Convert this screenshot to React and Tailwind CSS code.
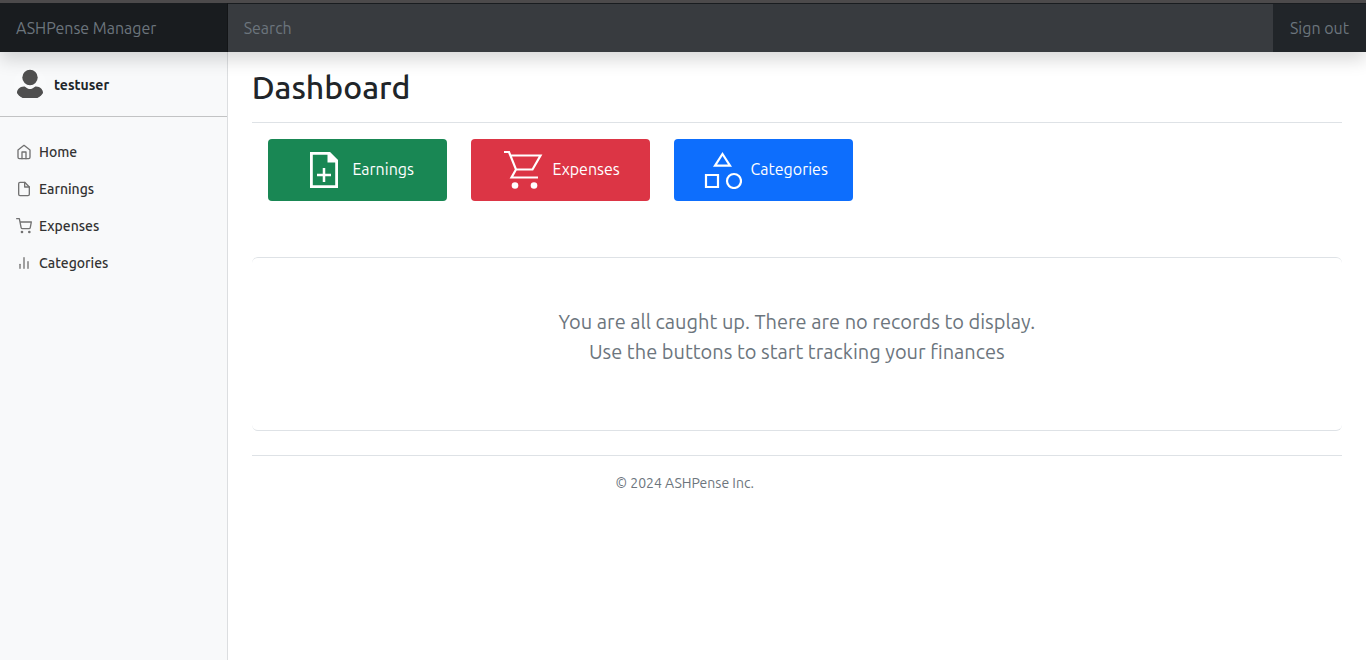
import { FiHome, FiFile, FiShoppingCart, FiBarChart2 } from "react-icons/fi";

const links = [
  { label: "Home", Icon: FiHome },
  { label: "Earnings", Icon: FiFile },
  { label: "Expenses", Icon: FiShoppingCart },
  { label: "Categories", Icon: FiBarChart2 },
];

function UserIcon() {
  return (
    <svg width="32" height="32" viewBox="0 0 32 32" aria-hidden="true" className="shrink-0 rounded-full bg-[#f9fafb]">
      <circle cx="16" cy="9.5" r="7.7" fill="#4f4f4f" />
      <path fill="#4f4f4f" d="M10 18.500c2 0 2.500 2.500 6 2.500s4-2.500 6-2.500c4.500 0 7 3.500 7 6 0 3-3 5.500-6 5.500H9c-3 0-6-2.500-6-5.500 0-2.500 2.500-6 7-6z" />
    </svg>
  );
}

function NoteAddIcon() {
  return (
    <svg width="44" height="40" viewBox="-4 -1 44 40" fill="none" stroke="currentColor" aria-hidden="true">
      <path strokeWidth="2.800" d="M7.400 3.400H25L32.600 11V36.600H7.400z" />
      <path fill="currentColor" stroke="none" d="M23.500 2H26l8 8v2.500H23.500z" />
      <path strokeWidth="2.500" d="M20 18v14M13 25h14" />
    </svg>
  );
}

function CartIcon() {
  return (
    <svg width="44" height="40" viewBox="-2 -0.500 44 40" fill="none" stroke="currentColor" strokeWidth="2.200" aria-hidden="true">
      <path d="M1 2.500H6L13 20H29.500L37.500 6H7.500M13 20L8.500 28H35" />
      <circle cx="12" cy="36" r="3.300" fill="currentColor" stroke="none" />
      <circle cx="31" cy="36" r="3.300" fill="currentColor" stroke="none" />
    </svg>
  );
}

function ShapesIcon() {
  return (
    <svg width="44" height="40" viewBox="-5 -1 44 40" fill="none" stroke="currentColor" strokeWidth="2.200" aria-hidden="true">
      <path d="M19.500 4L27 15.700H12z" />
      <path d="M3 25H15V37H3z" />
      <circle cx="31" cy="31" r="7" />
    </svg>
  );
}

const actions = [
  { label: "Earnings", Icon: NoteAddIcon, style: "bg-[#198754]" },
  { label: "Expenses", Icon: CartIcon, style: "bg-[#dc3545]" },
  { label: "Categories", Icon: ShapesIcon, style: "bg-[#0d6efd]" },
];

export default function App() {
  return (
    <div className="flex min-h-screen flex-col bg-white font-['Ubuntu','Noto_Sans',sans-serif] text-base text-[#212529]">
      <header className="relative z-10 flex border-t-3 border-[#4c4a4b] bg-[#212529] text-[#6c757d] shadow-[0_8px_16px_rgba(0,0,0,0.15)]">
        <a href="#" className="w-1/6 shrink-0 border-r border-[#131517] bg-[#191c1f] px-4 pt-[13px] pb-3">ASHPense Manager</a>
        <input
          type="text"
          aria-label="Search"
          placeholder="Search"
          className="min-w-0 grow border-t border-[#191c1f] bg-[#383b3f] px-4 placeholder:text-[#6c757d] outline-none"
        />
        <a href="#" className="border-t border-[#191c1f] px-[17px] py-3">Sign out</a>
      </header>

      <div className="flex grow">
        <nav className="w-1/6 shrink-0 border-r border-[#dcdee0] bg-[#f8f9fa] text-sm">
          <div className="flex items-center gap-2 border-b border-[#c2c3c4] px-[14px] py-4 font-bold">
            <UserIcon />
            <span className="pt-0.5">testuser</span>
          </div>
          <ul className="pt-4">
            {links.map(({ label, Icon }) => (
              <li key={label}>
                <a href="#" className="flex items-center gap-[7px] px-4 py-2 font-medium text-[#333]">
                  <Icon className="size-4 text-[#727272]" />
                  <span className="pt-0.5 leading-[19px]">{label}</span>
                </a>
              </li>
            ))}
          </ul>
        </nav>

        <main className="grow px-6">
          <h1 className="border-b border-[#dee2e6] pt-4 pb-4 text-[32px] leading-[38px] font-medium">Dashboard</h1>
          <div className="flex gap-6 px-4 pt-4 pb-14">
            {actions.map(({ label, Icon, style }) => (
              <button key={label} type="button" className={`flex h-[62px] w-[179px] items-center justify-center gap-2 rounded-sm pb-0.5 text-white ${style}`}>
                <Icon />
                {label}
              </button>
            ))}
          </div>
          <section className="rounded-md border-y border-[#dee2e6] px-12 pt-[49px] pb-[63px] text-center text-xl leading-[30px] text-[#6c757d]">
            <p>You are all caught up. There are no records to display.</p>
            <p>Use the buttons to start tracking your finances</p>
          </section>
          <footer className="mt-6 border-t border-[#dee2e6] pt-[17px] text-sm leading-[21px] text-[#6c757d]">
            <p className="mr-56 text-center">© 2024 ASHPense Inc.</p>
          </footer>
        </main>
      </div>
    </div>
  );
}
